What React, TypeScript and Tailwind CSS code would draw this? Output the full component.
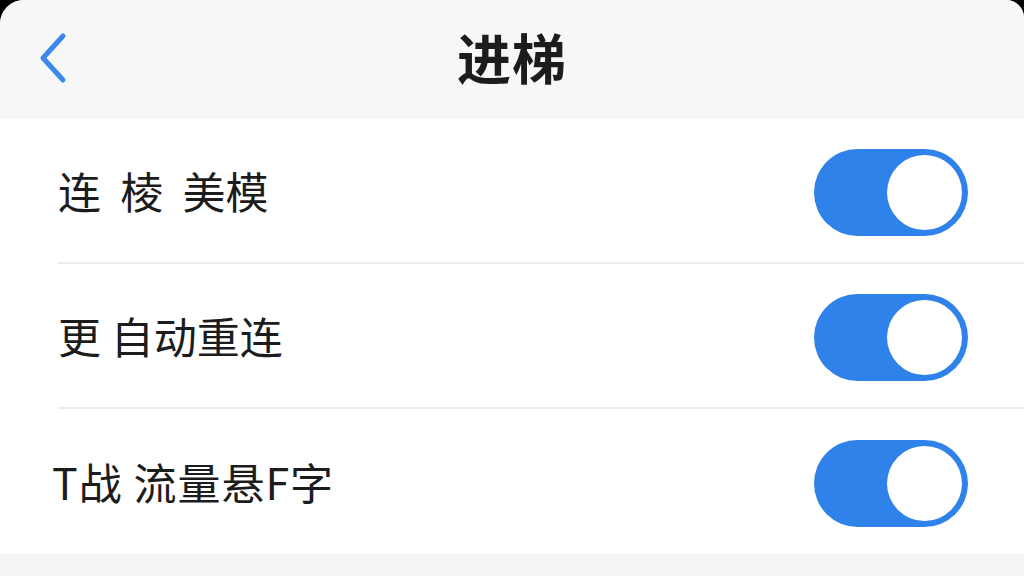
import { useState } from "react";

type Setting = { id: string; label: string; on: boolean };

const initial: Setting[] = [
  { id: "multi", label: "连  棱  美模", on: true },
  { id: "reconnect", label: "更 自动重连", on: true },
  { id: "traffic", label: "T战 流量悬F字", on: true },
];

const Toggle = ({ on, onClick }: { on: boolean; onClick: () => void }) => (
  <button
    onClick={onClick}
    className={`flex items-center w-[154px] h-[87px] rounded-full px-[6px] shrink-0 mt-[3px] ${
      on ? "bg-[#2f82e9] justify-end" : "bg-[#e5e5ea] justify-start"
    }`}
  >
    <span className="block w-[75px] h-[75px] rounded-full bg-white"></span>
  </button>
);

const App = () => {
  const [items, setItems] = useState(initial);

  const flip = (id: string) =>
    setItems((prev) => prev.map((s) => (s.id === id ? { ...s, on: !s.on } : s)));

  return (
    <div className="w-[1024px] h-[576px] bg-black overflow-hidden">
      <div
        className="w-full h-full flex flex-col bg-[#f4f4f4] rounded-tl-[24px] rounded-tr-[18px] overflow-hidden text-[#1c1c1c]"
        style={{ fontFamily: '"Noto Sans CJK SC", "Noto Sans", sans-serif' }}
      >
        {/* Nav bar */}
        <div className="relative h-[119px] bg-[#f7f7f7] flex items-center justify-center shrink-0">
          <button className="absolute left-[32px] top-[27px] p-1">
            <svg width="32" height="54" viewBox="0 0 32 54" fill="none">
              <path
                d="M27 5 L7 27 L27 49"
                stroke="#3a87ee"
                strokeWidth="5"
                strokeLinecap="round"
                strokeLinejoin="round"
              />
            </svg>
          </button>
          <h1 className="text-[54px] font-bold leading-none tracking-[1px] -mt-[6px]">进梯</h1>
        </div>

        {/* Settings list */}
        <div className="bg-white pl-[58px] shrink-0">
          {items.map((s, i) => (
            <div
              key={s.id}
              className={`h-[145px] flex items-center justify-between pr-[56px] ${
                i < items.length - 1 ? "border-b-2 border-[#ececec]" : ""
              }`}
            >
              <span
                className={`text-[43px] leading-none whitespace-pre ${
                  i === 2 ? "-ml-[6px] tracking-[1px]" : ""
                }`}
              >
                {s.label}
              </span>
              <Toggle on={s.on} onClick={() => flip(s.id)} />
            </div>
          ))}
        </div>

        <div className="flex-1 bg-[#f4f4f4]"></div>
      </div>
    </div>
  );
};

export default App;
